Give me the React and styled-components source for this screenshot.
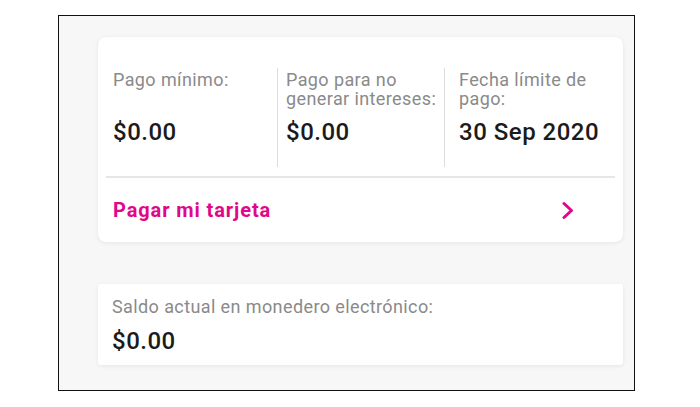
import React from 'react'
import styled, { createGlobalStyle } from 'styled-components'

const GlobalStyle = createGlobalStyle`
  body {
    margin: 0;
    background: #ffffff;
    font-family: Roboto, "Liberation Sans", Arial, sans-serif;
  }
`

const Frame = styled.div`
  box-sizing: border-box;
  width: 577px;
  height: 376px;
  margin: 15px 0 0 58px;
  border: 1px solid #111;
  background: #f7f7f7;
  padding: 21px 11px 0 39px;
  display: flex;
  flex-direction: column;
  gap: 42px;
`

const Card = styled.div`
  background: #fff;
  border-radius: ${p => p.$radius || 8}px;
  box-shadow: 0 1px 4px rgba(0, 0, 0, 0.08);
`

const Summary = styled(Card)`
  height: 205px;
  padding: 31px 8px 0 8px;
  box-sizing: border-box;
  display: flex;
  flex-direction: column;
`

const Stats = styled.div`
  display: grid;
  grid-template-columns: 171px 167px 1fr;
  height: 99px;
`

const Stat = styled.div`
  padding: 2px 2px 0 ${p => p.$pad}px;
  border-left: ${p => (p.$divider ? '1px solid #dcdcdc' : 'none')};
  display: flex;
  flex-direction: column;
  gap: 10px;
`

const Label = styled.div`
  font-size: 18px;
  line-height: 19px;
  letter-spacing: 0.4px;
  color: #8a8a8a;
  min-height: ${p => (p.$single ? 'auto' : '38px')};
`

const Value = styled.div`
  font-size: 24px;
  line-height: 28px;
  font-weight: 500;
  letter-spacing: 0.5px;
  color: #1b1b1b;
`

const Divider = styled.div`
  height: 2px;
  background: #e6e6e6;
  margin-top: 9px;
`

const PayRow = styled.div`
  flex: 1;
  display: flex;
  align-items: center;
  justify-content: space-between;
  padding: 0 41px 0 7px;
  cursor: pointer;
`

const PayText = styled.span`
  font-size: 20px;
  font-weight: 700;
  letter-spacing: 0.9px;
  color: #e1078a;
`

const Wallet = styled(Card)`
  height: 81px;
  box-sizing: border-box;
  padding: 13px 14px 0;
  display: flex;
  flex-direction: column;
  gap: 11px;
`

function Chevron() {
  return (
    <svg width="12" height="19" viewBox="0 0 12 19">
      <polyline
        points="2,2.5 9.5,9.5 2,16.5"
        fill="none"
        stroke="#e1078a"
        strokeWidth="3"
        strokeLinecap="round"
        strokeLinejoin="round"
      />
    </svg>
  )
}

export default function App() {
  return (
    <>
      <GlobalStyle />
      <Frame>
        <Summary>
          <Stats>
            <Stat $pad={7}>
              <Label>Pago mínimo:</Label>
              <Value>$0.00</Value>
            </Stat>
            <Stat $pad={8} $divider>
              <Label>Pago para no generar intereses:</Label>
              <Value>$0.00</Value>
            </Stat>
            <Stat $pad={14} $divider>
              <Label>Fecha límite de pago:</Label>
              <Value>30 Sep 2020</Value>
            </Stat>
          </Stats>
          <Divider />
          <PayRow>
            <PayText>Pagar mi tarjeta</PayText>
            <Chevron />
          </PayRow>
        </Summary>
        <Wallet $radius={3}>
          <Label $single>Saldo actual en monedero electrónico:</Label>
          <Value>$0.00</Value>
        </Wallet>
      </Frame>
    </>
  )
}
